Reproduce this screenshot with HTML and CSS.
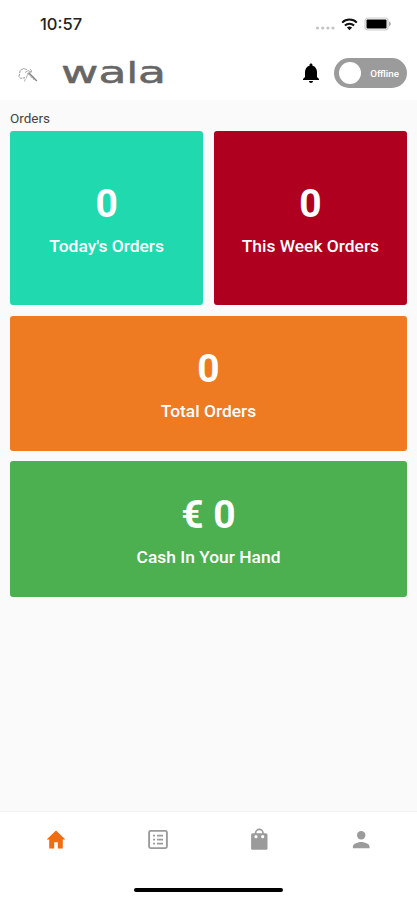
FILE: index.html
```html
<!DOCTYPE html>
<html lang="en">
<head>
    <meta charset="UTF-8">
    <meta name="viewport" content="width=device-width, initial-scale=1.0">
    <title>Wala</title>
    <link rel="stylesheet" href="styles.css">
</head>
<body>
    <!-- Status bar -->
    <div class="status-bar">
        <span class="time">10:57</span>
        <div class="status-icons">
            <svg width="20" height="6" viewBox="0 0 20 6" fill="#c4c4c4">
                <circle cx="2.5" cy="3" r="1.6"/>
                <circle cx="7.7" cy="3" r="1.6"/>
                <circle cx="12.9" cy="3" r="1.6"/>
                <circle cx="18" cy="3" r="1.6"/>
            </svg>
            <svg class="wifi" width="17" height="13" viewBox="0 0 17 13">
                <path d="M1.2 4.6C5.2.6 11.8.6 15.8 4.6M3.9 7.5c2.6-2.5 6.6-2.5 9.2 0" fill="none" stroke="#111" stroke-width="2"/>
                <path d="M5.9 9.5c1.5-1.4 3.7-1.4 5.2 0L8.5 12.3z" fill="#111"/>
            </svg>
            <svg class="battery" width="28" height="14" viewBox="0 0 28 14">
                <rect x="1" y="1" width="23" height="12" rx="3" fill="#fff" stroke="#ccc" stroke-width="1.2"/>
                <rect x="2.5" y="2.6" width="20" height="8.9" rx="1" fill="#000"/>
                <path d="M25 4.6c2.4 1 2.4 3.8 0 4.8z" fill="#aaa"/>
            </svg>
        </div>
    </div>

    <header>
        <svg class="rider" width="20" height="16" viewBox="0 0 20 16" fill="none" stroke="#999">
            <path d="M5.5 1.5L2.2 3.5 1 9.5l1.5 1.8 4.5-.5" stroke-dasharray="3 .7"/>
            <path d="M5.5 1.5l3.5 1.2M7 5.5l3-1.800 3.500 1.300M8 11.500l1.300-3.300 2.700-2.500M6.500 14.500l.8-2.500M12 2l1.800 2-1.300 1.800" stroke-width=".8"/>
            <path d="M9 6.500l3 1.500 1.500 3M14 9.500l2 3.500" stroke-width=".8"/>
            <path d="M10.500 5.500l4.500 4.500 3.800 4" stroke="#888" stroke-width="1.400"/>
        </svg>
        <svg class="logo" width="108" height="44" viewBox="0 0 108 44">
            <text x="0" y="31.500" textLength="105" lengthAdjust="spacingAndGlyphs">wa<tspan class="short">l</tspan>a</text>
        </svg>
        <svg class="bell" width="24" height="24" viewBox="0 0 24 24">
            <path d="M12 22c1.100 0 2-.9 2-2h-4c0 1.100.9 2 2 2zm6-6v-5c0-3.070-1.640-5.640-4.500-6.320V4c0-.83-.67-1.500-1.500-1.500s-1.500.67-1.500 1.500v.68C7.630 5.360 6 7.920 6 11v5l-2 2v1h16v-1l-2-2z"/>
        </svg>
        <button class="toggle">
            <span class="knob"></span>
            <span class="toggle-label">Offline</span>
        </button>
    </header>

    <!-- Order summary -->
    <main>
        <h2>Orders</h2>
        <div class="cards">
            <div class="card today">
                <strong>0</strong>
                <p>Today's Orders</p>
            </div>
            <div class="card week">
                <strong>0</strong>
                <p>This Week Orders</p>
            </div>
            <div class="card wide total">
                <strong>0</strong>
                <p>Total Orders</p>
            </div>
            <div class="card wide cash">
                <strong>€ 0</strong>
                <p>Cash In Your Hand</p>
            </div>
        </div>
    </main>

    <!-- Bottom navigation -->
    <nav>
        <a href="#" class="active" aria-label="Home">
            <svg width="22" height="24" viewBox="0 0 22 24">
                <path d="M11 2.500L1.600 11.600h2.600v8.900h5v-6.300h3.600v6.300h5v-8.900h2.600z"/>
            </svg>
        </a>
        <a href="#" aria-label="Orders">
            <svg width="24" height="24" viewBox="0 0 24 24">
                <rect x="3.100" y="2.900" width="17.800" height="17.200" rx="1.500" fill="none" stroke="#9b9b9b" stroke-width="1.900"/>
                <path d="M7 6.700h2v1.700H7zM7 10.700h2v1.700H7zM7 14.700h2v1.700H7zM11 6.700h6v1.700h-6zM11 10.700h6v1.700h-6zM11 14.700h6v1.700h-6z"/>
            </svg>
        </a>
        <a href="#" aria-label="Bag">
            <svg width="24" height="24" viewBox="0 0 24 24">
                <path d="M8.600 7V5.100a3.700 3.700 0 0 1 7.400 0V7" fill="none" stroke="#9b9b9b" stroke-width="1.700"/>
                <rect x="4.100" y="5.300" width="16.400" height="16.500" rx="1.600"/>
                <circle cx="9" cy="8.700" r="1.600" fill="#fff"/>
                <circle cx="15.700" cy="8.700" r="1.600" fill="#fff"/>
            </svg>
        </a>
        <a href="#" aria-label="Profile">
            <svg width="24" height="24" viewBox="0 0 24 24">
                <circle cx="12.200" cy="7.300" r="4.200"/>
                <path d="M3.900 20.200v-1.700c0-2.900 5.500-4.500 8.300-4.500s8.300 1.600 8.300 4.500v1.700z"/>
            </svg>
        </a>
    </nav>
    <div class="home-indicator"></div>
</body>
</html>
```
FILE: styles.css
```css
* {
    box-sizing: border-box;
}
body {
    font-family: Roboto, sans-serif;
    margin: 0;
    height: 900px;
    display: flex;
    flex-direction: column;
    background-color: #fff;
}
.status-bar {
    display: flex;
    justify-content: space-between;
    align-items: center;
    height: 48px;
    padding: 0 25px 0 40px;
}
.time {
    font-family: Inter, sans-serif;
    font-size: 16.5px;
    font-weight: 500;
    color: #222;
}
.status-icons {
    display: flex;
    align-items: center;
}
.status-icons svg:first-child {
    margin-top: 8px;
}
.wifi {
    margin-left: 6px;
}
.battery {
    margin-left: 6px;
}
header {
    display: flex;
    align-items: center;
    height: 52px;
    padding: 0 10px 2px 18px;
}
.rider {
    margin-top: 3px;
}
.logo {
    margin-left: 23px;
    margin-right: auto;
}
.logo text {
    font-family: "DejaVu Sans", sans-serif;
    font-size: 31px;
    fill: #666;
    stroke: #666;
    stroke-width: 0.5px;
}
.logo .short {
    font-size: 28px;
}
.bell {
    margin-right: 11px;
}
.toggle {
    display: flex;
    align-items: center;
    width: 73px;
    height: 30px;
    padding: 0 8px 0 5px;
    border: none;
    border-radius: 15px;
    background-color: #9b9b9b;
}
.knob {
    width: 22px;
    height: 22px;
    border-radius: 50%;
    background-color: #fff;
}
.toggle-label {
    margin-left: auto;
    font-family: Roboto, sans-serif;
    font-size: 9.8px;
    font-weight: 500;
    color: #fff;
}
main {
    flex: 1;
    padding: 10px 10px 0;
    background-color: #fafafa;
}
h2 {
    margin: 0;
    height: 21px;
    font-size: 13.5px;
    line-height: 17px;
    font-weight: 400;
    color: #444;
}
.cards {
    display: grid;
    grid-template-columns: 1fr 1fr;
    grid-template-rows: 174px 135px 136px;
    gap: 10.5px;
}
.card {
    display: flex;
    flex-direction: column;
    align-items: center;
    justify-content: center;
    border-radius: 3px;
    color: #fff;
}
.wide {
    grid-column: span 2;
}
.card strong {
    padding-top: 1px;
    font-size: 39px;
    line-height: 48px;
}
.card p {
    margin: 7px 0 0;
    font-size: 17.4px;
    line-height: 22px;
    font-weight: 500;
}
.today {
    background-color: #20d9ae;
}
.week {
    background-color: #b00020;
}
.total {
    background-color: #ee7a22;
}
.cash {
    background-color: #4caf50;
}
nav {
    display: flex;
    height: 77px;
    padding: 16px 5px 0;
    border-top: 1px solid #f1f1f1;
}
nav a {
    flex: 1;
    text-align: center;
    fill: #9b9b9b;
}
nav .active {
    fill: #ee6f11;
}
.home-indicator {
    width: 149px;
    height: 4px;
    margin: 0 auto 8px;
    border-radius: 2px;
    background-color: #000;
}
```
